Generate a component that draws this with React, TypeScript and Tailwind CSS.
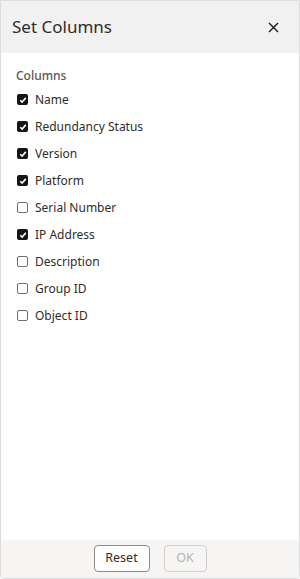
import React, { useState } from 'react';

const columns = [
  { id: 'name', label: 'Name', checked: true },
  { id: 'redundancy', label: 'Redundancy Status', checked: true },
  { id: 'version', label: 'Version', checked: true },
  { id: 'platform', label: 'Platform', checked: true },
  { id: 'serial', label: 'Serial Number', checked: false },
  { id: 'ip', label: 'IP Address', checked: true },
  { id: 'description', label: 'Description', checked: false },
  { id: 'group', label: 'Group ID', checked: false },
  { id: 'object', label: 'Object ID', checked: false },
];

const Checkbox: React.FC<{ checked: boolean }> = ({ checked }) =>
  checked ? (
    <span className="flex h-[11px] w-[11px] items-center justify-center rounded-[2px] bg-[#161513]">
      <svg width="8" height="8" viewBox="0 0 8 8" fill="none">
        <path d="M1.3 4.2 3.1 6 6.8 1.9" stroke="#fff" strokeWidth="1.6" />
      </svg>
    </span>
  ) : (
    <span className="h-[11px] w-[11px] rounded-[2px] border border-[#6f6e6c] bg-white" />
  );

const App: React.FC = () => {
  const [items, setItems] = useState(columns);

  const toggle = (id: string) =>
    setItems((prev) => prev.map((c) => (c.id === id ? { ...c, checked: !c.checked } : c)));

  return (
    <div className="flex h-[579px] w-[300px] flex-col overflow-hidden rounded-b-[4px] border border-[#dcdcdc] bg-white font-['Noto_Sans',sans-serif] text-[#161513]">
      <div className="flex h-[52px] shrink-0 items-center justify-between bg-[#f1f1f1] pl-[11px] pr-[20px]">
        <h1 className="text-[17px] font-normal text-[#312d2a]">Set Columns</h1>
        <button className="text-[#161513]">
          <svg width="11" height="11" viewBox="0 0 11 11">
            <path d="M1 1 10 10M10 1 1 10" stroke="currentColor" strokeWidth="1.4" />
          </svg>
        </button>
      </div>

      <div className="flex-1 px-[15px] pt-[14px]">
        <div className="mb-[1px] text-[12px] font-medium text-[#5b5652]">Columns</div>
        <div className="flex flex-col">
          {items.map((c) => (
            <label
              key={c.id}
              onClick={() => toggle(c.id)}
              className="flex h-[27px] cursor-pointer items-center gap-[7px] pl-[1px] text-[12px] text-[#312d2a]"
            >
              <Checkbox checked={c.checked} />
              <span>{c.label}</span>
            </label>
          ))}
        </div>
      </div>

      <div className="flex h-[38px] shrink-0 items-center justify-center gap-[14px] bg-[#f6f5f3] pb-[1px]">
        <button className="h-[27px] w-[56px] rounded-[4px] border border-[#8f8c89] bg-white text-[12.5px] text-[#312d2a]">
          Reset
        </button>
        <button
          disabled
          className="h-[27px] w-[43px] rounded-[4px] border border-[#d2d0ce] bg-transparent text-[12.5px] text-[#b5b3b0]"
        >
          OK
        </button>
      </div>
    </div>
  );
};

export default App;
